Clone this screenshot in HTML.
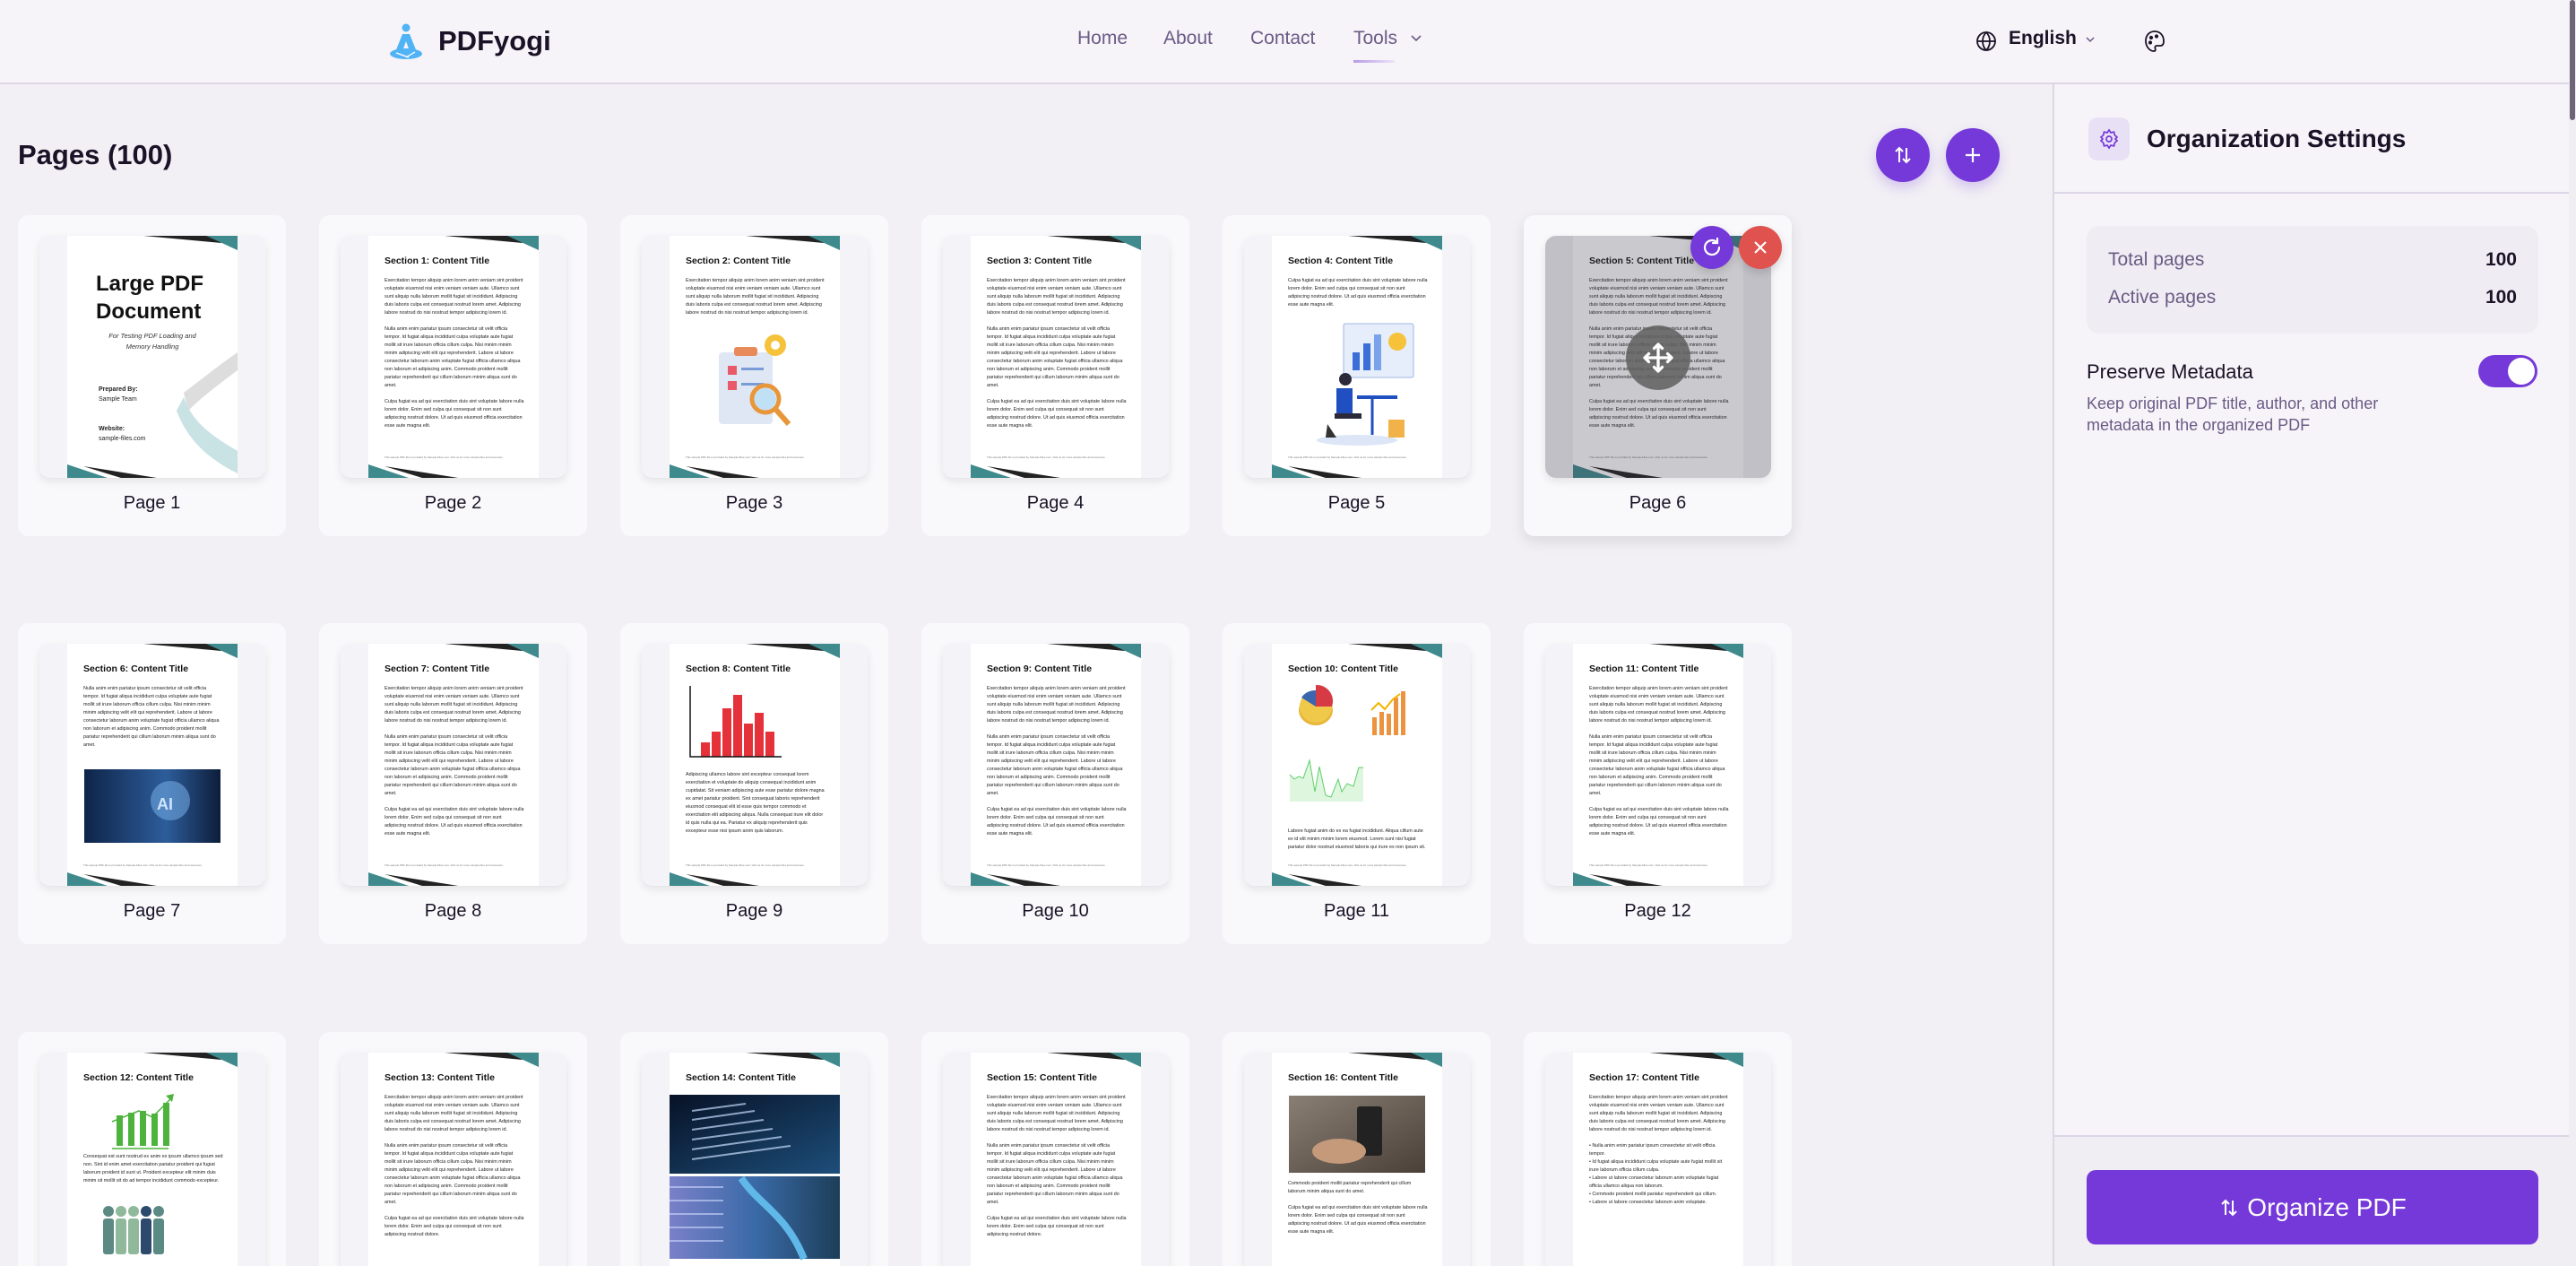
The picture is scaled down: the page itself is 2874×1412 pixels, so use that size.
<!DOCTYPE html>
<html style="overflow:hidden;width:2874px;height:1412px"><head><meta charset="utf-8"><style>
*{box-sizing:border-box;margin:0;padding:0}
html,body{width:2874px;height:1412px;overflow:hidden}
body{background:#f2f0f5;font-family:"Liberation Sans",sans-serif;color:#1a1226}
#wrap{position:relative;width:2874px;height:1412px;overflow:hidden;background:#f2f0f5}
.hdr{position:absolute;left:0;top:0;width:2866px;height:94px;background:#f6f4f9;border-bottom:2px solid #dcd6e6}
.nav{position:absolute;top:31px;font-size:21px;color:#6b5a85}
.side{position:absolute;left:2290px;top:94px;width:576px;height:1318px;background:#f6f4f9;border-left:2px solid #dcd6e6;overflow:hidden}
.sb{position:absolute;left:2866px;top:0;width:8px;height:1412px;background:#f0eef3}
.sb div{position:absolute;left:1px;top:0;width:6px;height:134px;background:#6e6577;border-radius:3px}
.main-t{position:absolute;left:20px;top:155px;font-size:31px;font-weight:bold}
.fab{position:absolute;top:143px;width:60px;height:60px;border-radius:50%;background:#7539d9;box-shadow:0 6px 14px rgba(117,57,217,.25)}
.fab svg{position:absolute;left:18px;top:18px}
.card{position:absolute;width:299px;height:358px;background:#f9f9fb;border-radius:12px}
.r3{height:261px;overflow:hidden;border-radius:12px 12px 0 0}
.th{position:absolute;left:24px;top:23px;width:252px;height:270px;background:#f4f3f7;border-radius:12px;overflow:hidden;box-shadow:0 4px 10px rgba(0,0,0,.09)}
.pg{position:absolute;left:31px;top:0;width:190px;height:270px;background:#fff;overflow:hidden}
.dc{position:absolute;left:0;top:0;width:190px;height:270px}
.h{position:absolute;left:18px;top:22px;font-size:10.5px;font-weight:bold;color:#111;white-space:nowrap}
.tx{position:absolute;left:18px;top:46px;width:156px;font-size:5.4px;line-height:9px;color:#222}
.tx p{margin-bottom:9px}
.ft{position:absolute;left:18px;top:245px;font-size:3px;color:#777;white-space:nowrap}
.lbl{position:absolute;left:0;top:310px;width:299px;text-align:center;font-size:20px;color:#1a1226}
</style></head><body><div id="wrap">

<div class="hdr">
 <svg style="position:absolute;left:434px;top:26px" width="38" height="40" viewBox="0 0 38 40"><circle cx="19" cy="5" r="4.5" fill="#4fb3f6"/><path d="M15 12h8l8 20H7z" fill="#4fb3f6"/><path d="M19 20l-4 11h8z" fill="#f6f4f9"/><ellipse cx="19" cy="34" rx="18" ry="6" fill="#4fb3f6"/><path d="M8 33l14 5M29 32l-10 6" stroke="#f6f4f9" stroke-width="1.5"/></svg>
 <div style="position:absolute;left:489px;top:28px;font-size:31px;font-weight:bold;color:#1a1226">PDFyogi</div>
 <div class="nav" style="left:1202px">Home</div>
 <div class="nav" style="left:1298px">About</div>
 <div class="nav" style="left:1395px">Contact</div>
 <div class="nav" style="left:1510px">Tools</div>
 <svg style="position:absolute;left:1573px;top:38px" width="14" height="10" viewBox="0 0 14 10"><path d="M2 2l5 5 5-5" stroke="#6b5a85" stroke-width="1.6" fill="none"/></svg>
 <div style="position:absolute;left:1510px;top:67px;width:46px;height:3px;background:linear-gradient(90deg,#b89be8,#ece4f7)"></div>
 <svg style="position:absolute;left:2204px;top:34px" width="24" height="24" viewBox="0 0 24 24" fill="none" stroke="#1a1226" stroke-width="1.8"><circle cx="12" cy="12" r="10"/><path d="M2 12h20M12 2c3 3 4 6.5 4 10s-1 7-4 10c-3-3-4-6.5-4-10s1-7 4-10z"/></svg>
 <div style="position:absolute;left:2241px;top:31px;font-size:21px;font-weight:bold;color:#1a1226">English</div>
 <svg style="position:absolute;left:2326px;top:40px" width="12" height="9" viewBox="0 0 12 9"><path d="M2 2l4 4 4-4" stroke="#6b5a85" stroke-width="1.5" fill="none"/></svg>
 <svg style="position:absolute;left:2392px;top:33px" width="24" height="26" viewBox="0 0 24 26" fill="none" stroke="#1a1226" stroke-width="1.8"><path d="M12 2C6 2 2 6.5 2 12.5S6 24 11 24c2 0 2-1.5 1.5-3s0-3 2-3H18c3 0 4-2 4-5C22 6.5 18 2 12 2z"/><circle cx="8" cy="9" r="1.2" fill="#1a1226"/><circle cx="14" cy="7.5" r="1.2" fill="#1a1226"/><circle cx="7" cy="14.5" r="1.2" fill="#1a1226"/></svg>
</div>

<div class="main-t">Pages (100)</div>
<div class="fab" style="left:2093px"><svg width="24" height="24" viewBox="0 0 24 24" fill="none" stroke="#fff" stroke-width="2"><path d="M8 20V4M4 8l4-4 4 4M16 4v16M12 16l4 4 4-4"/></svg></div>
<div class="fab" style="left:2171px"><svg width="24" height="24" viewBox="0 0 24 24" fill="none" stroke="#fff" stroke-width="2.2"><path d="M12 4v16M4 12h16"/></svg></div>

<!-- ROW 1 -->
<div class="card" style="left:20px;top:240px"><div class="th"><div class="pg">
<svg class="dc" viewBox="0 0 190 270"><path d="M85 0H165L172 8Z" fill="#222"/><path d="M155 0H190V16Z" fill="#3e8a8c"/><path d="M0 255V270H45Z" fill="#3e8a8c"/><path d="M18 257L100 270H60Z" fill="#222"/><path d="M130 175C150 160 175 140 190 130V150C170 165 150 180 135 195Z" fill="#ddd"/><path d="M122 195C135 230 160 250 190 265V240C165 225 140 210 130 180Z" fill="#c9e2e3"/></svg>
<div style="position:absolute;left:32px;top:38px;font-size:24px;font-weight:bold;line-height:31px;color:#111">Large PDF<br>Document</div>
<div style="position:absolute;left:0;width:190px;top:106px;text-align:center;font-size:7.5px;font-style:italic;line-height:12px;color:#333">For Testing PDF Loading and<br>Memory Handling</div>
<div style="position:absolute;left:35px;top:166px;font-size:7px;line-height:11px;color:#222"><b>Prepared By:</b><br>Sample Team<br><br><br><b>Website:</b><br>sample-files.com</div>
</div></div><div class="lbl">Page 1</div></div>

<div class="card" style="left:356px;top:240px"><div class="th"><div class="pg">
<svg class="dc" viewBox="0 0 190 270"><path d="M85 0H165L172 8Z" fill="#222"/><path d="M155 0H190V16Z" fill="#3e8a8c"/><path d="M0 255V270H45Z" fill="#3e8a8c"/><path d="M18 257L100 270H60Z" fill="#222"/></svg>
<div class="h">Section 1: Content Title</div>
<div class="tx"><p>Exercitation tempor aliquip anim lorem anim veniam sint proident voluptate eiusmod nisi enim veniam veniam aute. Ullamco sunt sunt aliquip nulla laborum mollit fugiat sit incididunt. Adipiscing duis laboris culpa est consequat nostrud lorem amet. Adipiscing labore nostrud do nisi nostrud tempor adipiscing lorem id.</p><p>Nulla anim enim pariatur ipsum consectetur sit velit officia tempor. Id fugiat aliqua incididunt culpa voluptate aute fugiat mollit sit irure laborum officia cillum culpa. Nisi minim minim minim adipiscing velit elit qui reprehenderit. Labore ut labore consectetur laborum anim voluptate fugiat officia ullamco aliqua non laborum et adipiscing anim. Commodo proident mollit pariatur reprehenderit qui cillum laborum minim aliqua sunt do amet.</p><p>Culpa fugiat ea ad qui exercitation duis sint voluptate labore nulla lorem dolor. Enim sed culpa qui consequat sit non sunt adipiscing nostrud dolore. Ut ad quis eiusmod officia exercitation esse aute magna elit.</p></div>
<div class="ft">This sample PDF file is provided by Sample-Files.com. Visit us for more sample files and resources.</div>
</div></div><div class="lbl">Page 2</div></div>

<div class="card" style="left:692px;top:240px"><div class="th"><div class="pg">
<svg class="dc" viewBox="0 0 190 270"><path d="M85 0H165L172 8Z" fill="#222"/><path d="M155 0H190V16Z" fill="#3e8a8c"/><path d="M0 255V270H45Z" fill="#3e8a8c"/><path d="M18 257L100 270H60Z" fill="#222"/>
<rect x="55" y="130" width="60" height="80" rx="4" fill="#dfe7f5"/><rect x="72" y="124" width="26" height="10" rx="3" fill="#e88a5a"/><rect x="65" y="145" width="10" height="10" fill="#e85a6a"/><rect x="80" y="147" width="25" height="3" fill="#7b9bd8"/><rect x="65" y="162" width="10" height="10" fill="#e85a6a"/><rect x="80" y="164" width="25" height="3" fill="#7b9bd8"/><circle cx="118" cy="122" r="12" fill="#f5c23a"/><circle cx="118" cy="122" r="5" fill="#fff"/><circle cx="107" cy="182" r="15" fill="none" stroke="#e8963a" stroke-width="5"/><circle cx="107" cy="182" r="12" fill="#bfe0f5"/><path d="M118 193L133 210" stroke="#e8963a" stroke-width="6"/></svg>
<div class="h">Section 2: Content Title</div>
<div class="tx"><p>Exercitation tempor aliquip anim lorem anim veniam sint proident voluptate eiusmod nisi enim veniam veniam aute. Ullamco sunt sunt aliquip nulla laborum mollit fugiat sit incididunt. Adipiscing duis laboris culpa est consequat nostrud lorem amet. Adipiscing labore nostrud do nisi nostrud tempor adipiscing lorem id.</p></div>
<div class="ft">This sample PDF file is provided by Sample-Files.com. Visit us for more sample files and resources.</div>
</div></div><div class="lbl">Page 3</div></div>

<div class="card" style="left:1028px;top:240px"><div class="th"><div class="pg">
<svg class="dc" viewBox="0 0 190 270"><path d="M85 0H165L172 8Z" fill="#222"/><path d="M155 0H190V16Z" fill="#3e8a8c"/><path d="M0 255V270H45Z" fill="#3e8a8c"/><path d="M18 257L100 270H60Z" fill="#222"/></svg>
<div class="h">Section 3: Content Title</div>
<div class="tx"><p>Exercitation tempor aliquip anim lorem anim veniam sint proident voluptate eiusmod nisi enim veniam veniam aute. Ullamco sunt sunt aliquip nulla laborum mollit fugiat sit incididunt. Adipiscing duis laboris culpa est consequat nostrud lorem amet. Adipiscing labore nostrud do nisi nostrud tempor adipiscing lorem id.</p><p>Nulla anim enim pariatur ipsum consectetur sit velit officia tempor. Id fugiat aliqua incididunt culpa voluptate aute fugiat mollit sit irure laborum officia cillum culpa. Nisi minim minim minim adipiscing velit elit qui reprehenderit. Labore ut labore consectetur laborum anim voluptate fugiat officia ullamco aliqua non laborum et adipiscing anim. Commodo proident mollit pariatur reprehenderit qui cillum laborum minim aliqua sunt do amet.</p><p>Culpa fugiat ea ad qui exercitation duis sint voluptate labore nulla lorem dolor. Enim sed culpa qui consequat sit non sunt adipiscing nostrud dolore. Ut ad quis eiusmod officia exercitation esse aute magna elit.</p></div>
<div class="ft">This sample PDF file is provided by Sample-Files.com. Visit us for more sample files and resources.</div>
</div></div><div class="lbl">Page 4</div></div>

<div class="card" style="left:1364px;top:240px"><div class="th"><div class="pg">
<svg class="dc" viewBox="0 0 190 270"><path d="M85 0H165L172 8Z" fill="#222"/><path d="M155 0H190V16Z" fill="#3e8a8c"/><path d="M0 255V270H45Z" fill="#3e8a8c"/><path d="M18 257L100 270H60Z" fill="#222"/>
<rect x="80" y="98" width="78" height="60" rx="2" fill="#e6eefb" stroke="#9fb6e0"/><rect x="90" y="130" width="8" height="20" fill="#3a6fd8"/><rect x="102" y="120" width="8" height="30" fill="#3a6fd8"/><rect x="114" y="110" width="8" height="40" fill="#7ba3ec"/><circle cx="140" cy="118" r="10" fill="#f5c23a"/><ellipse cx="95" cy="228" rx="45" ry="6" fill="#dde6f6"/><circle cx="82" cy="160" r="7" fill="#2a2a3a"/><path d="M72 170h18v28H72z" fill="#1f4fc0"/><path d="M70 198h30v6H70z" fill="#2a2a3a"/><rect x="95" y="178" width="45" height="4" fill="#1f4fc0"/><path d="M112 182v40" stroke="#1f4fc0" stroke-width="3"/><rect x="130" y="205" width="18" height="20" fill="#f2b24a"/><path d="M62 210l10 15h-12z" fill="#333"/></svg>
<div class="h">Section 4: Content Title</div>
<div class="tx"><p>Culpa fugiat ea ad qui exercitation duis sint voluptate labore nulla lorem dolor. Enim sed culpa qui consequat sit non sunt adipiscing nostrud dolore. Ut ad quis eiusmod officia exercitation esse aute magna elit.</p></div>
<div class="ft">This sample PDF file is provided by Sample-Files.com. Visit us for more sample files and resources.</div>
</div></div><div class="lbl">Page 5</div></div>

<div class="card" style="left:1700px;top:240px;box-shadow:0 6px 16px rgba(0,0,0,.1)"><div class="th"><div class="pg">
<svg class="dc" viewBox="0 0 190 270"><path d="M85 0H165L172 8Z" fill="#222"/><path d="M155 0H190V16Z" fill="#3e8a8c"/><path d="M0 255V270H45Z" fill="#3e8a8c"/><path d="M18 257L100 270H60Z" fill="#222"/></svg>
<div class="h">Section 5: Content Title</div>
<div class="tx"><p>Exercitation tempor aliquip anim lorem anim veniam sint proident voluptate eiusmod nisi enim veniam veniam aute. Ullamco sunt sunt aliquip nulla laborum mollit fugiat sit incididunt. Adipiscing duis laboris culpa est consequat nostrud lorem amet. Adipiscing labore nostrud do nisi nostrud tempor adipiscing lorem id.</p><p>Nulla anim enim pariatur ipsum consectetur sit velit officia tempor. Id fugiat aliqua incididunt culpa voluptate aute fugiat mollit sit irure laborum officia cillum culpa. Nisi minim minim minim adipiscing velit elit qui reprehenderit. Labore ut labore consectetur laborum anim voluptate fugiat officia ullamco aliqua non laborum et adipiscing anim. Commodo proident mollit pariatur reprehenderit qui cillum laborum minim aliqua sunt do amet.</p><p>Culpa fugiat ea ad qui exercitation duis sint voluptate labore nulla lorem dolor. Enim sed culpa qui consequat sit non sunt adipiscing nostrud dolore. Ut ad quis eiusmod officia exercitation esse aute magna elit.</p></div>
<div class="ft">This sample PDF file is provided by Sample-Files.com. Visit us for more sample files and resources.</div>
</div><div style="position:absolute;inset:0;background:rgba(60,55,70,.27)"></div>
<div style="position:absolute;left:90px;top:100px;width:72px;height:72px;border-radius:50%;background:rgba(95,95,95,.85)"><svg style="position:absolute;left:18px;top:18px" width="36" height="36" viewBox="0 0 24 24" fill="none" stroke="#fff" stroke-width="2.2" stroke-linecap="round" stroke-linejoin="round"><path d="M12 2v20M2 12h20M9 5l3-3 3 3M9 19l3 3 3-3M5 9l-3 3 3 3M19 9l3 3-3 3"/></svg></div>
</div>
<div style="position:absolute;left:186px;top:12px;width:48px;height:48px;border-radius:50%;background:#7539d9;box-shadow:0 4px 10px rgba(0,0,0,.15)"><svg style="position:absolute;left:12px;top:12px" width="24" height="24" viewBox="0 0 24 24" fill="none" stroke="#fff" stroke-width="2.2" stroke-linecap="round"><path d="M20 12a8 8 0 1 1-3-6.2"/><path d="M18 2v5h-5"/></svg></div>
<div style="position:absolute;left:240px;top:12px;width:48px;height:48px;border-radius:50%;background:#df524e;box-shadow:0 4px 10px rgba(0,0,0,.15)"><svg style="position:absolute;left:14px;top:14px" width="20" height="20" viewBox="0 0 20 20" stroke="#fff" stroke-width="2.2"><path d="M4 4l12 12M16 4L4 16"/></svg></div>
<div class="lbl">Page 6</div></div>

<!-- ROW 2 -->
<div class="card" style="left:20px;top:695px"><div class="th"><div class="pg">
<svg class="dc" viewBox="0 0 190 270"><path d="M85 0H165L172 8Z" fill="#222"/><path d="M155 0H190V16Z" fill="#3e8a8c"/><path d="M0 255V270H45Z" fill="#3e8a8c"/><path d="M18 257L100 270H60Z" fill="#222"/><defs><linearGradient id="ai" x1="0" x2="1"><stop offset="0" stop-color="#0e2449"/><stop offset=".6" stop-color="#2d5d9a"/><stop offset="1" stop-color="#0d1d3a"/></linearGradient></defs><rect x="19" y="140" width="152" height="82" fill="url(#ai)"/><circle cx="115" cy="175" r="22" fill="#6fa6e0" opacity=".6"/><text x="100" y="185" font-size="18" font-weight="bold" fill="#cfe3ff" font-family="Liberation Sans">AI</text></svg>
<div class="h">Section 6: Content Title</div>
<div class="tx"><p>Nulla anim enim pariatur ipsum consectetur sit velit officia tempor. Id fugiat aliqua incididunt culpa voluptate aute fugiat mollit sit irure laborum officia cillum culpa. Nisi minim minim minim adipiscing velit elit qui reprehenderit. Labore ut labore consectetur laborum anim voluptate fugiat officia ullamco aliqua non laborum et adipiscing anim. Commodo proident mollit pariatur reprehenderit qui cillum laborum minim aliqua sunt do amet.</p></div>
<div class="ft">This sample PDF file is provided by Sample-Files.com. Visit us for more sample files and resources.</div>
</div></div><div class="lbl">Page 7</div></div>

<div class="card" style="left:356px;top:695px"><div class="th"><div class="pg">
<svg class="dc" viewBox="0 0 190 270"><path d="M85 0H165L172 8Z" fill="#222"/><path d="M155 0H190V16Z" fill="#3e8a8c"/><path d="M0 255V270H45Z" fill="#3e8a8c"/><path d="M18 257L100 270H60Z" fill="#222"/></svg>
<div class="h">Section 7: Content Title</div>
<div class="tx"><p>Exercitation tempor aliquip anim lorem anim veniam sint proident voluptate eiusmod nisi enim veniam veniam aute. Ullamco sunt sunt aliquip nulla laborum mollit fugiat sit incididunt. Adipiscing duis laboris culpa est consequat nostrud lorem amet. Adipiscing labore nostrud do nisi nostrud tempor adipiscing lorem id.</p><p>Nulla anim enim pariatur ipsum consectetur sit velit officia tempor. Id fugiat aliqua incididunt culpa voluptate aute fugiat mollit sit irure laborum officia cillum culpa. Nisi minim minim minim adipiscing velit elit qui reprehenderit. Labore ut labore consectetur laborum anim voluptate fugiat officia ullamco aliqua non laborum et adipiscing anim. Commodo proident mollit pariatur reprehenderit qui cillum laborum minim aliqua sunt do amet.</p><p>Culpa fugiat ea ad qui exercitation duis sint voluptate labore nulla lorem dolor. Enim sed culpa qui consequat sit non sunt adipiscing nostrud dolore. Ut ad quis eiusmod officia exercitation esse aute magna elit.</p></div>
<div class="ft">This sample PDF file is provided by Sample-Files.com. Visit us for more sample files and resources.</div>
</div></div><div class="lbl">Page 8</div></div>

<div class="card" style="left:692px;top:695px"><div class="th"><div class="pg">
<svg class="dc" viewBox="0 0 190 270"><path d="M85 0H165L172 8Z" fill="#222"/><path d="M155 0H190V16Z" fill="#3e8a8c"/><path d="M0 255V270H45Z" fill="#3e8a8c"/><path d="M18 257L100 270H60Z" fill="#222"/>
<g fill="#e5323a"><rect x="35" y="110" width="10" height="16"/><rect x="47" y="98" width="10" height="28"/><rect x="59" y="72" width="10" height="54"/><rect x="71" y="57" width="10" height="69"/><rect x="83" y="89" width="10" height="37"/><rect x="95" y="77" width="10" height="49"/><rect x="107" y="98" width="10" height="28"/></g><path d="M23 47V126H125" stroke="#111" stroke-width="1.5" fill="none"/></svg>
<div class="h">Section 8: Content Title</div>
<div class="tx" style="top:142px"><p>Adipiscing ullamco labore sint excepteur consequat lorem exercitation et voluptate do aliquip consequat incididunt anim cupidatat. Sit veniam adipiscing aute esse pariatur dolore magna ex amet pariatur proident. Sint consequat laboris reprehenderit eiusmod consequat elit id esse quis tempor commodo et exercitation elit adipiscing aliqua. Nulla consequat irure elit dolor id quis nulla qui ea. Pariatur ex aliquip reprehenderit quis excepteur esse nisi ipsum anim quis laborum.</p></div>
<div class="ft">This sample PDF file is provided by Sample-Files.com. Visit us for more sample files and resources.</div>
</div></div><div class="lbl">Page 9</div></div>

<div class="card" style="left:1028px;top:695px"><div class="th"><div class="pg">
<svg class="dc" viewBox="0 0 190 270"><path d="M85 0H165L172 8Z" fill="#222"/><path d="M155 0H190V16Z" fill="#3e8a8c"/><path d="M0 255V270H45Z" fill="#3e8a8c"/><path d="M18 257L100 270H60Z" fill="#222"/></svg>
<div class="h">Section 9: Content Title</div>
<div class="tx"><p>Exercitation tempor aliquip anim lorem anim veniam sint proident voluptate eiusmod nisi enim veniam veniam aute. Ullamco sunt sunt aliquip nulla laborum mollit fugiat sit incididunt. Adipiscing duis laboris culpa est consequat nostrud lorem amet. Adipiscing labore nostrud do nisi nostrud tempor adipiscing lorem id.</p><p>Nulla anim enim pariatur ipsum consectetur sit velit officia tempor. Id fugiat aliqua incididunt culpa voluptate aute fugiat mollit sit irure laborum officia cillum culpa. Nisi minim minim minim adipiscing velit elit qui reprehenderit. Labore ut labore consectetur laborum anim voluptate fugiat officia ullamco aliqua non laborum et adipiscing anim. Commodo proident mollit pariatur reprehenderit qui cillum laborum minim aliqua sunt do amet.</p><p>Culpa fugiat ea ad qui exercitation duis sint voluptate labore nulla lorem dolor. Enim sed culpa qui consequat sit non sunt adipiscing nostrud dolore. Ut ad quis eiusmod officia exercitation esse aute magna elit.</p></div>
<div class="ft">This sample PDF file is provided by Sample-Files.com. Visit us for more sample files and resources.</div>
</div></div><div class="lbl">Page 10</div></div>

<div class="card" style="left:1364px;top:695px"><div class="th"><div class="pg">
<svg class="dc" viewBox="0 0 190 270"><path d="M85 0H165L172 8Z" fill="#222"/><path d="M155 0H190V16Z" fill="#3e8a8c"/><path d="M0 255V270H45Z" fill="#3e8a8c"/><path d="M18 257L100 270H60Z" fill="#222"/>
<ellipse cx="49" cy="74" rx="19" ry="17" fill="#e8b63a"/><circle cx="49" cy="70" r="18" fill="#f0c84a"/><path d="M49 70V46A18 18 0 0 1 67 70Z" fill="#d63a44"/><path d="M49 70L33 60A18 18 0 0 1 49 52Z" fill="#3a66b0"/><g fill="#ec933f"><rect x="112" y="82" width="5" height="20"/><rect x="120" y="76" width="5" height="26"/><rect x="128" y="78" width="5" height="24"/><rect x="136" y="60" width="5" height="42"/><rect x="144" y="53" width="5" height="49"/></g><path d="M111 74l8-8 7 7 9-11 8-6" stroke="#f2b400" stroke-width="2" fill="none"/><path d="M20 146l5 5 5-3 5 2 7-20 6 35 5-28 7 32 6 2 8-20 4 14 6-9 7 3 6-21h5v38H20z" fill="#def6de"/><path d="M20 146l5 5 5-3 5 2 7-20 6 35 5-28 7 32 6 2 8-20 4 14 6-9 7 3 6-21h5" stroke="#5ccf6a" fill="none"/></svg>
<div class="h">Section 10: Content Title</div>
<div class="tx" style="top:205px"><p>Labore fugiat anim do ex ea fugiat incididunt. Aliqua cillum aute ex id elit minim minim lorem eiusmod. Lorem sunt nisi fugiat pariatur dolor nostrud eiusmod laboris qui irure ex non ipsum sit.</p></div>
<div class="ft">This sample PDF file is provided by Sample-Files.com. Visit us for more sample files and resources.</div>
</div></div><div class="lbl">Page 11</div></div>

<div class="card" style="left:1700px;top:695px"><div class="th"><div class="pg">
<svg class="dc" viewBox="0 0 190 270"><path d="M85 0H165L172 8Z" fill="#222"/><path d="M155 0H190V16Z" fill="#3e8a8c"/><path d="M0 255V270H45Z" fill="#3e8a8c"/><path d="M18 257L100 270H60Z" fill="#222"/></svg>
<div class="h">Section 11: Content Title</div>
<div class="tx"><p>Exercitation tempor aliquip anim lorem anim veniam sint proident voluptate eiusmod nisi enim veniam veniam aute. Ullamco sunt sunt aliquip nulla laborum mollit fugiat sit incididunt. Adipiscing duis laboris culpa est consequat nostrud lorem amet. Adipiscing labore nostrud do nisi nostrud tempor adipiscing lorem id.</p><p>Nulla anim enim pariatur ipsum consectetur sit velit officia tempor. Id fugiat aliqua incididunt culpa voluptate aute fugiat mollit sit irure laborum officia cillum culpa. Nisi minim minim minim adipiscing velit elit qui reprehenderit. Labore ut labore consectetur laborum anim voluptate fugiat officia ullamco aliqua non laborum et adipiscing anim. Commodo proident mollit pariatur reprehenderit qui cillum laborum minim aliqua sunt do amet.</p><p>Culpa fugiat ea ad qui exercitation duis sint voluptate labore nulla lorem dolor. Enim sed culpa qui consequat sit non sunt adipiscing nostrud dolore. Ut ad quis eiusmod officia exercitation esse aute magna elit.</p></div>
<div class="ft">This sample PDF file is provided by Sample-Files.com. Visit us for more sample files and resources.</div>
</div></div><div class="lbl">Page 12</div></div>

<!-- ROW 3 (clipped at frame bottom) -->
<div class="card r3" style="left:20px;top:1151px"><div class="th"><div class="pg">
<svg class="dc" viewBox="0 0 190 270"><path d="M85 0H165L172 8Z" fill="#222"/><path d="M155 0H190V16Z" fill="#3e8a8c"/>
<g fill="#4db33d"><rect x="55" y="70" width="7" height="34"/><rect x="68" y="67" width="7" height="37"/><rect x="81" y="65" width="7" height="39"/><rect x="94" y="68" width="7" height="36"/><rect x="107" y="56" width="7" height="48"/></g><path d="M50 77l30-12 15 7 20-20" stroke="#4db33d" stroke-width="1.5" fill="none"/><path d="M110 48l9-2-2 9z" fill="#4db33d"/><path d="M50 107h63" stroke="#4db33d" stroke-width="1.5"/>
<g><circle cx="46" cy="177" r="6" fill="#5b8a84"/><rect x="40" y="185" width="12" height="40" rx="3" fill="#5b8a84"/><circle cx="60" cy="177" r="6" fill="#8fb99a"/><rect x="54" y="185" width="12" height="40" rx="3" fill="#8fb99a"/><circle cx="74" cy="177" r="6" fill="#8fb99a"/><rect x="68" y="185" width="12" height="40" rx="3" fill="#8fb99a"/><circle cx="88" cy="177" r="6" fill="#2d4a6e"/><rect x="82" y="185" width="12" height="40" rx="3" fill="#2d4a6e"/><circle cx="102" cy="177" r="6" fill="#5b8a84"/><rect x="96" y="185" width="12" height="40" rx="3" fill="#5b8a84"/></g></svg>
<div class="h">Section 12: Content Title</div>
<div class="tx" style="top:112px"><p>Consequat est sunt nostrud ex anim ex ipsum ullamco ipsum sed non. Sint id enim amet exercitation pariatur proident qui fugiat laborum proident id sunt ut. Proident excepteur elit minim duis minim sit mollit sit do ad tempor incididunt commodo excepteur.</p></div>
</div></div></div>

<div class="card r3" style="left:356px;top:1151px"><div class="th"><div class="pg">
<svg class="dc" viewBox="0 0 190 270"><path d="M85 0H165L172 8Z" fill="#222"/><path d="M155 0H190V16Z" fill="#3e8a8c"/></svg>
<div class="h">Section 13: Content Title</div>
<div class="tx"><p>Exercitation tempor aliquip anim lorem anim veniam sint proident voluptate eiusmod nisi enim veniam veniam aute. Ullamco sunt sunt aliquip nulla laborum mollit fugiat sit incididunt. Adipiscing duis laboris culpa est consequat nostrud lorem amet. Adipiscing labore nostrud do nisi nostrud tempor adipiscing lorem id.</p><p>Nulla anim enim pariatur ipsum consectetur sit velit officia tempor. Id fugiat aliqua incididunt culpa voluptate aute fugiat mollit sit irure laborum officia cillum culpa. Nisi minim minim minim adipiscing velit elit qui reprehenderit. Labore ut labore consectetur laborum anim voluptate fugiat officia ullamco aliqua non laborum et adipiscing anim. Commodo proident mollit pariatur reprehenderit qui cillum laborum minim aliqua sunt do amet.</p><p>Culpa fugiat ea ad qui exercitation duis sint voluptate labore nulla lorem dolor. Enim sed culpa qui consequat sit non sunt adipiscing nostrud dolore.</p></div>
</div></div></div>

<div class="card r3" style="left:692px;top:1151px"><div class="th"><div class="pg">
<svg class="dc" viewBox="0 0 190 270"><path d="M85 0H165L172 8Z" fill="#222"/><path d="M155 0H190V16Z" fill="#3e8a8c"/><defs><linearGradient id="cd" x1="0" y1="0" x2="1" y2="1"><stop offset="0" stop-color="#071226"/><stop offset="1" stop-color="#1d4e7a"/></linearGradient><linearGradient id="sv" x1="0" y1="0" x2="1" y2="0"><stop offset="0" stop-color="#7a80c8"/><stop offset=".5" stop-color="#3a6aa8"/><stop offset="1" stop-color="#1c3e58"/></linearGradient></defs><rect x="0" y="47" width="190" height="88" fill="url(#cd)"/><g stroke="#c8dcff" stroke-width="2" opacity=".7"><path d="M25 65l60-8M25 75l70-10M25 86l80-11M25 97l90-12M25 108l100-14M25 119l110-15"/></g><rect x="0" y="138" width="190" height="92" fill="url(#sv)"/><g stroke="#cfd8ff" stroke-width="2" opacity=".6"><path d="M0 150h60M0 165h60M0 180h60M0 195h60M0 210h60"/></g><path d="M80 140C100 170 130 180 150 230" stroke="#5fb8e8" stroke-width="8" fill="none"/></svg>
<div class="h">Section 14: Content Title</div>
</div></div></div>

<div class="card r3" style="left:1028px;top:1151px"><div class="th"><div class="pg">
<svg class="dc" viewBox="0 0 190 270"><path d="M85 0H165L172 8Z" fill="#222"/><path d="M155 0H190V16Z" fill="#3e8a8c"/></svg>
<div class="h">Section 15: Content Title</div>
<div class="tx"><p>Exercitation tempor aliquip anim lorem anim veniam sint proident voluptate eiusmod nisi enim veniam veniam aute. Ullamco sunt sunt aliquip nulla laborum mollit fugiat sit incididunt. Adipiscing duis laboris culpa est consequat nostrud lorem amet. Adipiscing labore nostrud do nisi nostrud tempor adipiscing lorem id.</p><p>Nulla anim enim pariatur ipsum consectetur sit velit officia tempor. Id fugiat aliqua incididunt culpa voluptate aute fugiat mollit sit irure laborum officia cillum culpa. Nisi minim minim minim adipiscing velit elit qui reprehenderit. Labore ut labore consectetur laborum anim voluptate fugiat officia ullamco aliqua non laborum et adipiscing anim. Commodo proident mollit pariatur reprehenderit qui cillum laborum minim aliqua sunt do amet.</p><p>Culpa fugiat ea ad qui exercitation duis sint voluptate labore nulla lorem dolor. Enim sed culpa qui consequat sit non sunt adipiscing nostrud dolore.</p></div>
</div></div></div>

<div class="card r3" style="left:1364px;top:1151px"><div class="th"><div class="pg">
<svg class="dc" viewBox="0 0 190 270"><path d="M85 0H165L172 8Z" fill="#222"/><path d="M155 0H190V16Z" fill="#3e8a8c"/><defs><linearGradient id="ph" x1="0" y1="0" x2="1" y2="1"><stop offset="0" stop-color="#8a7f74"/><stop offset="1" stop-color="#4a4038"/></linearGradient></defs><rect x="19" y="48" width="152" height="86" fill="url(#ph)"/><rect x="95" y="60" width="28" height="55" rx="3" fill="#222"/><ellipse cx="75" cy="110" rx="30" ry="14" fill="#c49a7a"/></svg>
<div class="h">Section 16: Content Title</div>
<div class="tx" style="top:142px"><p>Commodo proident mollit pariatur reprehenderit qui cillum laborum minim aliqua sunt do amet.</p><p>Culpa fugiat ea ad qui exercitation duis sint voluptate labore nulla lorem dolor. Enim sed culpa qui consequat sit non sunt adipiscing nostrud dolore. Ut ad quis eiusmod officia exercitation esse aute magna elit.</p></div>
</div></div></div>

<div class="card r3" style="left:1700px;top:1151px"><div class="th"><div class="pg">
<svg class="dc" viewBox="0 0 190 270"><path d="M85 0H165L172 8Z" fill="#222"/><path d="M155 0H190V16Z" fill="#3e8a8c"/></svg>
<div class="h">Section 17: Content Title</div>
<div class="tx"><p>Exercitation tempor aliquip anim lorem anim veniam sint proident voluptate eiusmod nisi enim veniam veniam aute. Ullamco sunt sunt aliquip nulla laborum mollit fugiat sit incididunt. Adipiscing duis laboris culpa est consequat nostrud lorem amet. Adipiscing labore nostrud do nisi nostrud tempor adipiscing lorem id.</p><p>• Nulla anim enim pariatur ipsum consectetur sit velit officia tempor.<br>• Id fugiat aliqua incididunt culpa voluptate aute fugiat mollit sit irure laborum officia cillum culpa.<br>• Labore ut labore consectetur laborum anim voluptate fugiat officia ullamco aliqua non laborum.<br>• Commodo proident mollit pariatur reprehenderit qui cillum.<br>• Labore ut labore consectetur laborum anim voluptate.</p></div>
</div></div></div>

<!-- SIDEBAR -->
<div class="side">
 <div style="position:absolute;left:38px;top:37px;width:46px;height:48px;border-radius:10px;background:#e8e1f5"><svg style="position:absolute;left:11px;top:12px" width="24" height="24" viewBox="0 0 24 24" fill="none" stroke="#7539d9" stroke-width="1.7"><circle cx="12" cy="12" r="3"/><path d="M12 2l2 3 3.5-.8.8 3.5L21 10l-2 2 2 2-2.7 2.3-.8 3.5L14 19l-2 3-2-3-3.5.8-.8-3.5L3 14l2-2-2-2 2.7-2.3.8-3.5L10 5z"/></svg></div>
 <div style="position:absolute;left:103px;top:45px;font-size:28px;font-weight:bold;color:#1a1226">Organization Settings</div>
 <div style="position:absolute;left:0;top:120px;width:574px;height:2px;background:#dcd6e6"></div>
 <div style="position:absolute;left:36px;top:158px;width:504px;height:120px;border-radius:14px;background:#efedf3">
  <div style="position:absolute;left:24px;top:26px;font-size:21px;color:#6b5a85">Total pages</div>
  <div style="position:absolute;right:24px;top:26px;font-size:21px;font-weight:bold;color:#1a1226">100</div>
  <div style="position:absolute;left:24px;top:68px;font-size:21px;color:#6b5a85">Active pages</div>
  <div style="position:absolute;right:24px;top:68px;font-size:21px;font-weight:bold;color:#1a1226">100</div>
 </div>
 <div style="position:absolute;left:36px;top:308px;font-size:22px;color:#1a1226">Preserve Metadata</div>
 <div style="position:absolute;left:473px;top:302px;width:66px;height:36px;border-radius:18px;background:#7539d9"><div style="position:absolute;right:3px;top:3px;width:30px;height:30px;border-radius:50%;background:#fff"></div></div>
 <div style="position:absolute;left:36px;top:344px;font-size:18px;line-height:24px;color:#6b5a85">Keep original PDF title, author, and other<br>metadata in the organized PDF</div>
 <div style="position:absolute;left:0;top:1172px;width:574px;height:146px;background:#f0eef3;border-top:2px solid #dcd6e6"></div>
 <div style="position:absolute;left:36px;top:1211px;width:504px;height:83px;border-radius:10px;background:#7539d9;color:#fff;font-size:28px;text-align:center;line-height:83px">
  <svg style="vertical-align:-3px;margin-right:8px" width="24" height="24" viewBox="0 0 24 24" fill="none" stroke="#fff" stroke-width="2"><path d="M8 20V4M4 8l4-4 4 4M16 4v16M12 16l4 4 4-4"/></svg>Organize PDF</div>
</div>
<div class="sb"><div></div></div>
</div></body></html>
